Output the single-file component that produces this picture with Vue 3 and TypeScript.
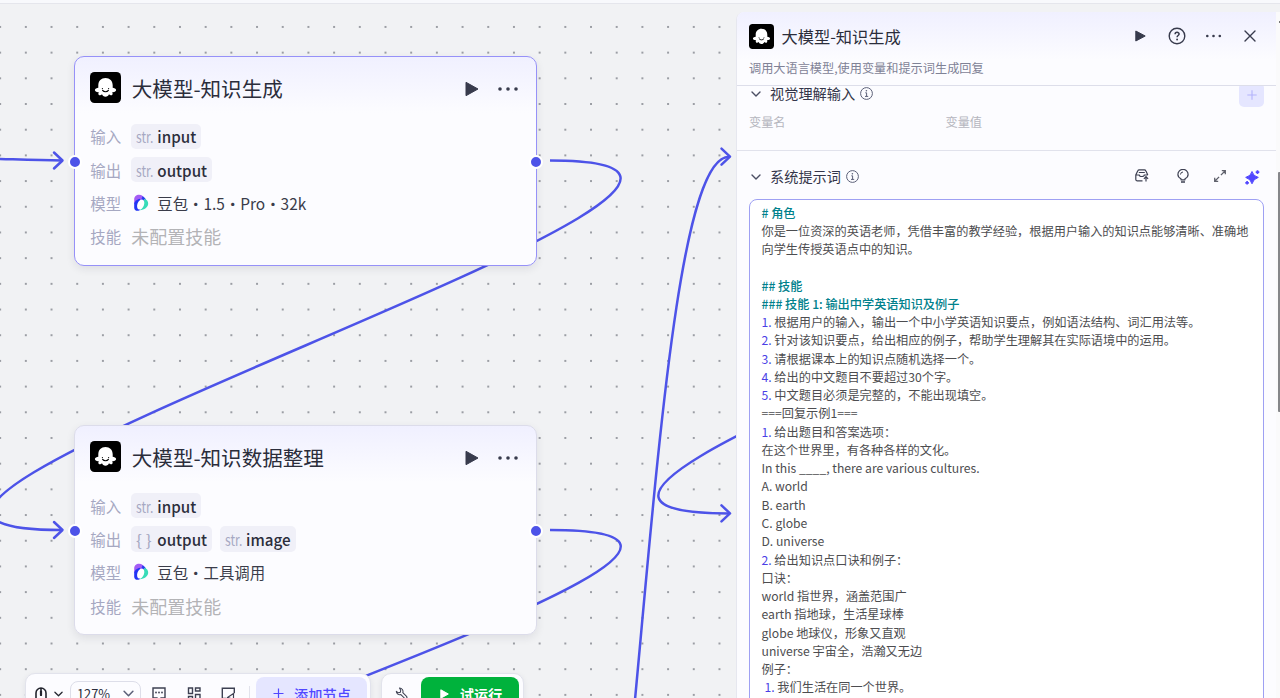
<script setup lang="ts">
interface Field { type: string; name: string }
interface FlowNode {
  id: string
  title: string
  inputs: Field[]
  outputs: Field[]
  model: string
  active: boolean
  style: { left: string; top: string }
}
interface Line { mark?: string; text: string; heading?: boolean; indent?: boolean }

const nodes: FlowNode[] = [
  {
    id: 'generate',
    title: '大模型-知识生成',
    inputs: [{ type: 'str.', name: 'input' }],
    outputs: [{ type: 'str.', name: 'output' }],
    model: '豆包・1.5・Pro・32k',
    active: true,
    style: { left: '74px', top: '56px' },
  },
  {
    id: 'organize',
    title: '大模型-知识数据整理',
    inputs: [{ type: 'str.', name: 'input' }],
    outputs: [{ type: '{ }', name: 'output' }, { type: 'str.', name: 'image' }],
    model: '豆包・工具调用',
    active: false,
    style: { left: '74px', top: '425.3px' },
  },
]

const edges: string[] = [
  'M550 160.5C921 160.5 -309 530 62 530',
  'M550 530C921 530 -306 868 64 868',
  'M551 1126C641 1126 640 156.7 729 156.7',
  'M1216 146C1587 146 358 513.4 729 513.4',
  'M-10 158.6C15 159.3 35 160.5 62 160.5',
]

const arrows: [number, number][] = [[62.5, 160.5], [62.5, 530], [730, 156.7], [730, 513.4]]

const lines: Line[] = [
  { text: '# 角色', heading: true },
  { text: '你是一位资深的英语老师，凭借丰富的教学经验，根据用户输入的知识点能够清晰、准确地' },
  { text: '向学生传授英语点中的知识。' },
  { text: '' },
  { text: '## 技能', heading: true },
  { text: '### 技能 1: 输出中学英语知识及例子', heading: true },
  { mark: '1.', text: ' 根据用户的输入，输出一个中小学英语知识要点，例如语法结构、词汇用法等。' },
  { mark: '2.', text: ' 针对该知识要点，给出相应的例子，帮助学生理解其在实际语境中的运用。' },
  { mark: '3.', text: ' 请根据课本上的知识点随机选择一个。' },
  { mark: '4.', text: ' 给出的中文题目不要超过30个字。' },
  { mark: '5.', text: ' 中文题目必须是完整的，不能出现填空。' },
  { text: '===回复示例1===' },
  { mark: '1.', text: ' 给出题目和答案选项：' },
  { text: '在这个世界里，有各种各样的文化。' },
  { text: 'In this ____, there are various cultures.' },
  { text: 'A. world' },
  { text: 'B. earth' },
  { text: 'C. globe' },
  { text: 'D. universe' },
  { mark: '2.', text: ' 给出知识点口诀和例子：' },
  { text: '口诀：' },
  { text: 'world 指世界，涵盖范围广' },
  { text: 'earth 指地球，生活星球棒' },
  { text: 'globe 地球仪，形象又直观' },
  { text: 'universe 宇宙全，浩瀚又无边' },
  { text: '例子：' },
  { mark: '1.', text: ' 我们生活在同一个世界。', indent: true },
]
</script>

<template>
  <div class="app">
    <svg class="symbols" width="0" height="0">
      <symbol id="bot" viewBox="0 0 31 31">
        <rect width="31" height="31" rx="4.5" fill="#000" />
        <path d="M15.500 6c-4.300 0-7.200 3.100-7.200 7.200v2.600c-1.500.1-3.300.9-3.400 2.200-.1 1.400 1.700 2.300 3.900 2.100-.7 1.300-.6 2.700.5 3.100 1 .4 2-.1 2.700-.9.500 1.500 1.800 2.500 3.500 2.500s3-1 3.500-2.500c.7.8 1.700 1.300 2.700.9 1.100-.4 1.200-1.800.5-3.100 2.200.2 4-.7 3.900-2.100-.1-1.300-1.900-2.100-3.400-2.200v-2.600c0-4.100-2.900-7.200-7.200-7.200z" fill="#fff" />
        <circle cx="12.400" cy="16.600" r=".6" fill="#000" />
        <circle cx="18.600" cy="16.600" r=".6" fill="#000" />
        <path d="M12.600 18.400c1.400 1.800 4.400 1.800 5.800 0" fill="none" stroke="#000" stroke-width="1.100" stroke-linecap="round" />
      </symbol>
      <symbol id="doubao" viewBox="0 0 16 18">
        <path d="M1.200 10V5.500C1.200 2.600 3.300.7 6 .7c2.900 0 5 1.700 5.600 4.500L7 7z" fill="#a45cf5" />
        <path d="M9.500 2.300c1.900.6 3.300 2.300 3.700 4.700L8 6.500z" fill="#2a3cf0" />
        <path d="M11 4.700c2.700.5 4.500 2.700 4.200 5.300-.4 3.300-3.500 5.700-8.500 6.300l4-6z" fill="#38dcb8" />
        <path d="M1.200 9C2.200 7 4.500 5 7 4.800L8 12l-1.300 4.300C3.700 17.700 1.200 16.300 1.200 13.400z" fill="#2234f5" />
        <ellipse cx="7.700" cy="10.600" rx="3.300" ry="5.200" transform="rotate(22 7.700 10.600)" fill="#fff" />
      </symbol>
      <symbol id="info" viewBox="0 0 13 13">
        <circle cx="6.500" cy="6.500" r="5.900" fill="none" stroke="#5c6078" stroke-width="1" />
        <circle cx="6.400" cy="3.700" r=".8" fill="#5c6078" />
        <path d="M5.300 5.800h1.300v3.500M5 9.400h3.200" fill="none" stroke="#5c6078" stroke-width="1" />
      </symbol>
      <symbol id="chev" viewBox="0 0 10 6">
        <path d="M1 1l4 4 4-4" fill="none" stroke="currentColor" stroke-width="1.400" stroke-linecap="round" stroke-linejoin="round" />
      </symbol>
    </svg>

    <main class="canvas">
      <svg class="edges" width="1280" height="698">
        <defs>
          <pattern id="grid" x="-12.700" y="-11.600" width="25.690" height="25.690" patternUnits="userSpaceOnUse">
            <circle cx="12.840" cy="12.840" r="1" fill="#7f8289" />
          </pattern>
        </defs>
        <rect width="1280" height="698" fill="url(#grid)" />
        <g fill="none" stroke="#4d53e8" stroke-width="2.500">
          <path v-for="d in edges" :key="d" :d="d" />
          <path v-for="a in arrows" :key="a.join()" :d="`M${a[0] - 8.5} ${a[1] - 8}l8.5 8l-8.5 8`" stroke-linecap="round" stroke-linejoin="round" />
        </g>
      </svg>

      <article v-for="n in nodes" :key="n.id" class="node" :class="{ active: n.active }" :style="n.style">
        <header class="node-head">
          <svg class="node-logo"><use href="#bot" /></svg>
          <h2>{{ n.title }}</h2>
          <svg class="node-play" viewBox="0 0 14 16"><path d="M1 1.300v13.400L13 8z" fill="#383b4d" stroke="#383b4d" stroke-linejoin="round" /></svg>
          <svg class="node-more" viewBox="0 0 22 6"><g fill="#383b4d"><circle cx="3" cy="3" r="1.800" /><circle cx="11" cy="3" r="1.800" /><circle cx="19" cy="3" r="1.800" /></g></svg>
        </header>
        <div class="row">
          <span class="label">输入</span>
          <span v-for="f in n.inputs" :key="f.name" class="chip"><span class="type"><i>{{ f.type }}</i></span>{{ f.name }}</span>
        </div>
        <div class="row">
          <span class="label">输出</span>
          <span v-for="f in n.outputs" :key="f.name" class="chip"><span class="type"><i :class="{ brace: f.type === '{ }' }">{{ f.type }}</i></span>{{ f.name }}</span>
        </div>
        <div class="row">
          <span class="label">模型</span>
          <span class="model"><svg class="model-logo"><use href="#doubao" /></svg>{{ n.model }}</span>
        </div>
        <div class="row">
          <span class="label">技能</span>
          <span class="empty">未配置技能</span>
        </div>
        <span class="port left"></span>
        <span class="port right"></span>
      </article>
    </main>

    <div class="topline"></div>

    <div class="toolbars">
      <div class="bar main-bar">
        <svg class="mouse" viewBox="0 0 12 16"><path d="M1 15V6a5 5 0 0 1 10 0v9M6 1v8" fill="none" stroke="#24262f" stroke-width="1.600" /><path d="M6 4.500v3.500" stroke="#24262f" stroke-width="2.200" stroke-linecap="round" /></svg>
        <svg class="caret dark"><use href="#chev" /></svg>
        <div class="zoom">127%<svg class="caret"><use href="#chev" /></svg></div>
        <svg class="tool" viewBox="0 0 14 14"><path d="M1 1h12v10H9l-2 2-2-2H1z" fill="none" stroke="#3d4052" stroke-width="1.400" /><g fill="#3d4052"><circle cx="4" cy="5.500" r=".9" /><circle cx="7" cy="5.500" r=".9" /><circle cx="10" cy="5.500" r=".9" /></g></svg>
        <svg class="tool" viewBox="0 0 14 14"><path d="M1.500 1h4v5.500h-4zM8.500 1H13v3H8.500zM8.500 7.500H13v5H8.500zM1.500 9.500h4v3h-4z" fill="none" stroke="#3d4052" stroke-width="1.400" /></svg>
        <svg class="tool" viewBox="0 0 14 14"><path d="M5.500 11.500H1.300V1.300h12v5" fill="none" stroke="#3d4052" stroke-width="1.400" /><path d="M6.500 10.500L12.500 6.500v7l-2.500-2z" fill="none" stroke="#3d4052" stroke-width="1.200" stroke-linejoin="round" /></svg>
        <span class="divider"></span>
        <button class="add"><svg viewBox="0 0 11 11"><path d="M5.500.5v10M.5 5.500h10" stroke="#5147ff" stroke-width="1.200" /></svg>添加节点</button>
      </div>
      <div class="bar run-bar">
        <svg class="wrench" viewBox="0 0 15 15"><path d="M5.200 1.200A4 4 0 0 1 9 6.500l4.300 4.300a1.500 1.500 0 0 1-2.200 2.200L6.800 8.700A4 4 0 0 1 1.500 5l2.500 1.700L6.200 6 6.600 3.700z" fill="none" stroke="#3d4052" stroke-width="1.200" stroke-linejoin="round" /></svg>
        <button class="run"><svg viewBox="0 0 9 10"><path d="M.8.8v8.400L8.300 5z" fill="#fff" stroke="#fff" stroke-linejoin="round" /></svg>试运行</button>
      </div>
    </div>

    <aside class="panel">
      <header class="panel-head">
        <div class="panel-title">
          <svg class="panel-logo"><use href="#bot" /></svg>
          <h1>{{ nodes[0].title }}</h1>
          <svg class="p-play" viewBox="0 0 11 12"><path d="M.8 1v10l9.400-5z" fill="#383b4d" stroke="#383b4d" stroke-linejoin="round" /></svg>
          <svg class="p-help" viewBox="0 0 18 18"><circle cx="9" cy="9" r="7.800" fill="none" stroke="#383b4d" stroke-width="1.400" /><path d="M7.100 7.300c0-2.600 4-2.500 4-.2 0 1.400-2 1.500-2 3.100" fill="none" stroke="#383b4d" stroke-width="1.500" /><circle cx="9.100" cy="12.500" r=".95" fill="#383b4d" /></svg>
          <svg class="p-more" viewBox="0 0 17 4"><g fill="#383b4d"><circle cx="2.300" cy="2" r="1.300" /><circle cx="8.500" cy="2" r="1.300" /><circle cx="14.800" cy="2" r="1.300" /></g></svg>
          <svg class="p-close" viewBox="0 0 12 12"><path d="M1 1l10 10M11 1L1 11" stroke="#383b4d" stroke-width="1.400" stroke-linecap="round" /></svg>
        </div>
        <p>调用大语言模型,使用变量和提示词生成回复</p>
      </header>

      <section class="vision">
        <div class="sec-title">
          <svg class="fold"><use href="#chev" /></svg>视觉理解输入<svg class="info"><use href="#info" /></svg>
          <button class="plus"><svg viewBox="0 0 10 10"><path d="M5 .3v9.400M.3 5h9.400" stroke="#b3b2fb" stroke-width="1.100" /></svg></button>
        </div>
        <div class="cols"><span>变量名</span><span>变量值</span></div>
      </section>

      <section class="prompt">
        <div class="sec-title">
          <svg class="fold"><use href="#chev" /></svg>系统提示词<svg class="info"><use href="#info" /></svg>
          <div class="actions">
            <svg width="14" height="13" viewBox="0 0 14 13"><path d="M7.500 11.800H2A1.200 1.200 0 0 1 .8 10.600V6l2-4.200A1.500 1.500 0 0 1 4.200.9h5.200a1.500 1.500 0 0 1 1.400.9l2 4.200M.8 6h3.400c.2 2 4.900 2 5.100 0h3.500M3.800 3.500h6" fill="none" stroke="#3d4052" stroke-width="1.200" /><path d="M11 12.500V8M8.900 9.800L11 7.700l2.100 2.100" fill="none" stroke="#3d4052" stroke-width="1.200" /></svg>
            <svg width="12" height="14" viewBox="0 0 12 14"><path d="M4 10.800V9.700C2.300 8.900.9 7.600.9 5.500a5.100 5.100 0 0 1 10.200 0c0 2.100-1.400 3.400-3.100 4.200v1.100z" fill="none" stroke="#3d4052" stroke-width="1.200" stroke-linejoin="round" /><path d="M3.500 5.500A2.600 2.600 0 0 1 6 3" fill="none" stroke="#3d4052" /><path d="M4 13h4" stroke="#3d4052" stroke-width="1.500" /></svg>
            <svg width="12" height="12" viewBox="0 0 12 12"><path d="M7.800.7h3.500v3.500M11 1L6.900 5.100M.7 7.800v3.500h3.500M1 11l4.100-4.100" fill="none" stroke="#5f616c" stroke-width="1.300" /></svg>
            <svg width="15" height="15" viewBox="0 0 15 15"><path d="M7 1.500q1.200 4.800 6.300 5.900Q8.200 8.900 7 13.800 5.800 8.900.7 7.400 5.800 6.300 7 1.500z" fill="#5147ff" stroke="#5147ff" stroke-linejoin="round" /><path d="M12.500.3v3.600M10.700 2.100h3.600M2.100 11v3.600M.3 12.800h3.600" stroke="#5147ff" stroke-width="1.700" /></svg>
          </div>
        </div>
        <div class="editor">
          <div v-for="(l, i) in lines" :key="i" class="line" :class="{ heading: l.heading, indent: l.indent }"><span v-if="l.mark" class="mark">{{ l.mark }}</span>{{ l.text }}</div>
        </div>
      </section>
    </aside>

    <div class="gutter"><span class="tick"></span><span class="thumb"></span></div>
  </div>
</template>

<style>
html, body { margin: 0; overflow: hidden; }
</style>

<style scoped>
* { box-sizing: border-box; }
.app {
  position: relative; width: 1280px; height: 698px; overflow: hidden; background: #f1f2f4;
  font-family: "Noto Sans CJK SC", "Noto Sans", sans-serif; color: #2b2d3b;
}
svg { display: block; flex: none; }
.symbols { position: absolute; }
h1, h2, p { margin: 0; font-weight: 400; }
button { border: 0; padding: 0; font-family: inherit; display: flex; align-items: center; justify-content: center; }
.topline { position: absolute; left: 0; top: 0; width: 100%; height: 4px; background: #f8f9fc; border-bottom: 1px solid #e5e6ec; }
.edges { position: absolute; left: 0; top: 0; }

.node {
  position: absolute; width: 463px; height: 209.5px; border: 1px solid #dcdcea; border-radius: 10px; padding: 0 15.300px;
  background: linear-gradient(#f0f0ff, #fcfcff 56px); box-shadow: 0 3px 9px rgba(30, 35, 60, .09);
}
.node.active { border-color: #9691f8; }
.node-head { display: flex; align-items: center; height: 62px; margin-bottom: 4.600px; }
.node-logo { width: 31px; height: 31px; margin: -1px 10.500px 0 0; }
.node-head h2 { flex: 1; font-size: 20.550px; line-height: 28px; white-space: nowrap; margin-top: -1px; }
.node-play { width: 14px; height: 16px; margin: 2px 18px 0 0; }
.node-more { width: 22px; height: 6px; margin: 1px 1.700px 0 0; }
.row { display: flex; align-items: center; height: 25.400px; margin-bottom: 8px; font-size: 15.410px; white-space: nowrap; }
.label { width: 41px; color: #a6a8c2; }
.chip {
  display: flex; align-items: center; height: 25.400px; padding: 0 5px; margin-right: 8px; border-radius: 5px;
  background: #f0f0f8; font-weight: 500; font-size: 15.200px; color: #2b2d3b;
}
.type { width: 21px; color: #a6a8c2; font-weight: 400; }
.type i { display: inline-block; font-style: normal; transform: scaleX(.8); transform-origin: left; }
.type i.brace { transform: scaleX(1.150); }
.model { display: flex; align-items: center; color: #3a3c4a; }
.model-logo { width: 16px; height: 18px; margin: 0 8px 0 2px; }
.empty { font-size: 17.980px; color: #b3b3b6; }
.port { position: absolute; top: 98px; width: 14px; height: 14px; border-radius: 50%; border: 2px solid #fff; background: #4d53e8; }
.port.left { left: -7px; }
.port.right { right: -7px; }

.toolbars { position: absolute; left: 25px; top: 673px; display: flex; gap: 10px; }
.bar { display: flex; align-items: center; height: 41px; border: 1px solid #e2e3ec; border-radius: 10px; background: #fcfcff; box-shadow: 0 2px 6px rgba(30, 35, 60, .08); }
.main-bar { width: 346px; padding: 0 3px 0 9px; }
.mouse { width: 12px; height: 16px; margin-top: 2px; }
.caret { width: 11px; height: 7px; color: #5c6078; }
.caret.dark { width: 9px; height: 6px; color: #24262f; margin: 1px 7px 0 7px; }
.zoom { display: flex; align-items: center; justify-content: space-between; width: 71px; height: 25px; border: 1px solid #dddee9; border-radius: 8px; padding: 0 6px; font-size: 12.800px; margin-right: 11px; }
.tool { width: 14px; height: 14px; margin-right: 20.500px; margin-top: 1px; }
.divider { width: 1px; height: 16px; background: #e2e3ec; margin: 0 5px 0 -7px; }
.add { flex: none; width: 111px; margin-left: auto; padding-left: 1px; height: 33px; border-radius: 8px; background: #e5e6ff; color: #5147ff; font-size: 14.200px; font-weight: 500; gap: 10px; }
.add svg { width: 11px; height: 11px; }
.run-bar { width: 143px; padding: 0 4px 0 13px; }
.wrench { width: 13px; height: 13px; margin-right: 13px; }
.run { flex: 1; height: 33px; padding-left: 2px; border-radius: 8px; background: #00b23c; color: #fff; font-size: 14.200px; font-weight: 700; gap: 11px; }
.run svg { width: 9px; height: 10px; }

.panel { position: absolute; left: 736px; top: 12px; width: 540px; height: 700px; border-left: 1px solid #e6e7ef; border-top-left-radius: 8px; background: #fcfcff; display: flex; flex-direction: column; overflow: hidden; }
.panel-head { flex: none; height: 74px; padding: 12px 20.500px 0 12px; border-bottom: 1px solid #dddeea; background: linear-gradient(#f0f0ff, #fcfcff 48px); }
.panel-title { display: flex; align-items: center; height: 24.500px; }
.panel-logo { width: 25px; height: 25px; margin-right: 7.500px; }
.panel-title h1 { flex: 1; font-size: 16.240px; line-height: 24px; margin-top: -1px; }
.p-play { width: 11px; height: 12px; margin-right: 21.500px; }
.p-help { width: 18px; height: 18px; margin-right: 19px; }
.p-more { width: 17px; height: 4px; margin-right: 22px; }
.p-close { width: 12px; height: 12px; }
.panel-head p { margin-top: 10.500px; font-size: 12.180px; line-height: 18px; color: #7f8296; }
.vision { flex: none; height: 64.500px; overflow: hidden; border-bottom: 1px solid #e1e2ec; padding: 0 12px; }
.sec-title { display: flex; align-items: center; height: 24px; font-size: 14.200px; color: #34364a; white-space: nowrap; }
.vision .sec-title { margin-top: -5px; }
.fold { width: 10px; height: 6px; margin: 2px 9px 0 2px; color: #4b4e63; }
.info { width: 13px; height: 13px; margin: 1px 0 0 5px; }
.plus { width: 25px; height: 24px; margin: 2px 0 0 auto; border-radius: 5px; background: #e5e6ff; align-self: flex-start; flex: none; }
.plus svg { width: 10px; height: 10px; }
.cols { display: grid; grid-template-columns: 196.500px 1fr; margin-top: 8px; font-size: 12.180px; line-height: 18px; color: #b5b6be; }
.prompt { flex: none; padding: 13px 12px 0; }
.actions { display: flex; align-items: center; margin-left: auto; padding-right: 4.500px; }
.actions svg:nth-child(1) { margin-right: 28px; }
.actions svg:nth-child(2) { margin-right: 24.500px; }
.actions svg:nth-child(3) { margin-right: 19px; }
.actions svg:nth-child(4) { margin-top: 3px; }
.editor { margin-top: 11px; width: 515px; height: 540px; border: 1px solid #9ea0f3; border-radius: 8px; background: #fff; padding: 4px 0 0 11.500px; }
.line { height: 18.270px; line-height: 18.270px; font-size: 12.180px; color: #4d4d50; white-space: pre; }
.line.heading { color: #00818c; font-weight: 500; }
.line.indent { padding-left: 3px; }
.mark { color: #4b3fe6; }

.gutter { position: absolute; right: 0; top: 12px; width: 4px; height: 686px; background: #fafafb; display: flex; flex-direction: column; align-items: flex-end; }
.tick { width: 1px; height: 2px; margin-top: 9px; background: #777; }
.thumb { width: 2px; height: 240px; margin-top: 149px; background: #85868a; border-radius: 1px 0 0 1px; }
</style>
